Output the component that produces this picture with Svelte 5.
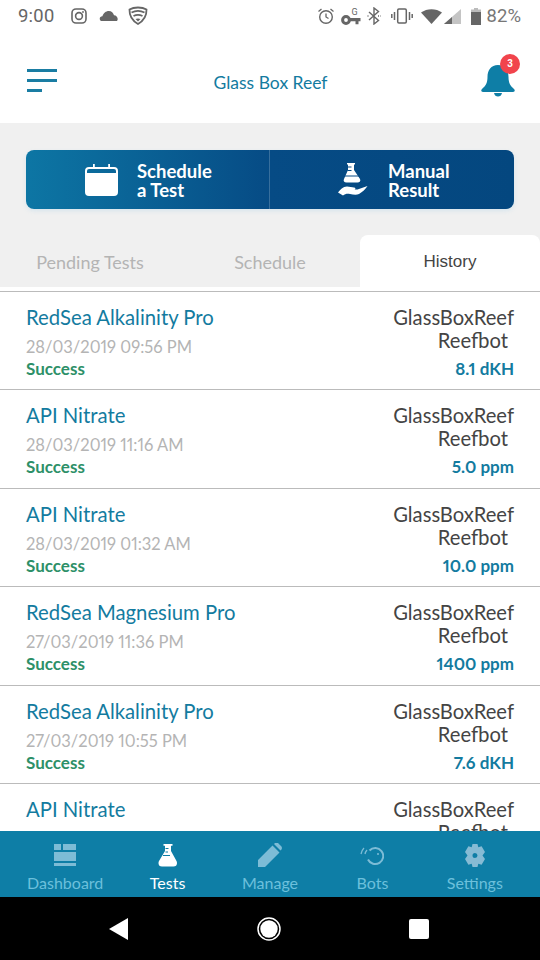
<script>
    const rows = [
        { name: "RedSea Alkalinity Pro", date: "28/03/2019 09:56 PM", value: "8.1 dKH" },
        { name: "API Nitrate", date: "28/03/2019 11:16 AM", value: "5.0 ppm" },
        { name: "API Nitrate", date: "28/03/2019 01:32 AM", value: "10.0 ppm" },
        { name: "RedSea Magnesium Pro", date: "27/03/2019 11:36 PM", value: "1400 ppm" },
        { name: "RedSea Alkalinity Pro", date: "27/03/2019 10:55 PM", value: "7.6 dKH" },
        { name: "API Nitrate", date: "27/03/2019 09:12 PM", value: "4.0 ppm" }
    ];
</script>

<div class="page">
    <div class="status">
        <span class="time">9:00</span>
        <svg class="si" width="18" height="18" viewBox="0 0 18 18">
            <rect x="2" y="2" width="14" height="14" rx="4" fill="none" stroke="#666" stroke-width="1.6" />
            <circle cx="9" cy="9" r="3.4" fill="none" stroke="#666" stroke-width="1.6" />
            <circle cx="13" cy="5" r="0.9" fill="#666" />
        </svg>
        <svg class="si cloud" width="20" height="14" viewBox="0 0 20 14">
            <path d="M2 12c-2.200-1.400-1.400-4.600 1.400-4.700C4.200 4.200 7 2 9.800 2c2.700 0 4.700 2 5.200 4.300 3 .1 4.800 3.700 3 5.700z" fill="#666" />
        </svg>
        <svg class="si shield" width="20" height="20" viewBox="0 0 20 20">
            <path d="M1.500 3.500C6 .8 14 .8 18.500 3.500c.2 6-2.500 11-8.500 14.500C4 14.500 1.300 9.500 1.500 3.500z" fill="none" stroke="#666" stroke-width="1.800" />
            <path d="M3.500 6.500c4-2 9-2 13 0M5.500 10c3-1.500 6-1.500 9 0" fill="none" stroke="#666" stroke-width="1.800" />
            <path d="M7.500 13c1.500-.8 3.500-.8 5 0L10 15.500z" fill="#666" />
        </svg>
        <span class="spacer"></span>
        <svg class="ri" width="18" height="18" viewBox="0 0 18 18">
            <circle cx="9" cy="10" r="6.300" fill="none" stroke="#666" stroke-width="1.400" />
            <path d="M9 6.500V10l2.500 1.500M1.500 4.500 4.500 2M16.500 4.500 13.500 2" fill="none" stroke="#666" stroke-width="1.300" />
        </svg>
        <svg class="ri key" width="20" height="20" viewBox="0 0 20 20">
            <circle cx="5" cy="14" r="3.400" fill="none" stroke="#666" stroke-width="3" />
            <path d="M8 12h11.500v3.200h-2v3h-3v-3H8z" fill="#666" />
            <text x="10.500" y="8.500" class="g">G</text>
        </svg>
        <svg class="ri" width="14" height="18" viewBox="0 0 14 18">
            <path d="M2 5l9.500 8.500L7 17V1l4.500 3.500L2 13" fill="none" stroke="#666" stroke-width="1.400" />
            <path d="M.5 9h2M11 9h2.500" stroke="#666" stroke-width="1.400" stroke-dasharray="1 1" />
        </svg>
        <svg class="ri vib" width="22" height="16" viewBox="0 0 22 16">
            <rect x="6.700" y="1" width="8.600" height="14" rx="1.200" fill="none" stroke="#666" stroke-width="1.500" />
            <path d="M3.500 4v8M18.500 4v8M.8 6v4M21.200 6v4" stroke="#666" stroke-width="1.500" />
        </svg>
        <svg class="ri wifi" width="21" height="15" viewBox="0 0 21 15">
            <path d="M0 3.500C6-1 15-1 21 3.500L10.500 15z" fill="#666" />
        </svg>
        <svg class="ri sig" width="17" height="15" viewBox="0 0 17 15">
            <path d="M17 0v15H0z" fill="#c4c4c4" />
            <path d="M8 8v7H0z" fill="#666" />
        </svg>
        <svg class="ri bat" width="10" height="17" viewBox="0 0 10 17">
            <path d="M3 0h4v1.500h3V4H0V1.500h3z" fill="#bbb" />
            <path d="M0 4h10v13H0z" fill="#666" />
        </svg>
        <span class="pct">82%</span>
    </div>

    <header>
        <div class="burger"><i></i><i></i><i class="short"></i></div>
        <div class="title">Glass Box Reef</div>
        <div class="bell">
            <svg width="36" height="32" viewBox="0 0 36 32">
                <path d="M18 0c-7 0-10.500 5-10.500 12 0 6-2 9-5.500 12-1.200 1-1 3 1 3h30c2 0 2.200-2 1-3-3.500-3-5.500-6-5.500-12C28.500 5 25 0 18 0z" fill="#0e7ea6" />
                <path d="M14 28h8c-.5 2.500-2 3.500-4 3.500s-3.500-1-4-3.500z" fill="#0e7ea6" />
            </svg>
            <span class="badge">3</span>
        </div>
    </header>

    <section class="top">
        <div class="actions">
            <div class="action first">
                <svg width="33" height="32" viewBox="0 0 33 32">
                    <path fill-rule="evenodd" d="M4 3h4V0h1.800v3h13.400V0H25v3h4a4 4 0 0 1 4 4v4H0V7a4 4 0 0 1 4-4zM4 5a2 2 0 0 0-2 2v2h29V7a2 2 0 0 0-2-2z" fill="#fff" />
                    <path d="M0 10h33v18a4 4 0 0 1-4 4H4a4 4 0 0 1-4-4z" fill="#fff" />
                </svg>
                <span>Schedule<br />a Test</span>
            </div>
            <div class="action second">
                <svg width="30" height="33" viewBox="0 0 30 33">
                    <path d="M9 0h8v1.500h-1V7l6 9c1 2-.2 3.500-2.500 3.500h-11C6.200 19.500 5 18 6 16l4-9V1.500H9z" fill="#fff" />
                    <path d="M9.500 4h4M9.500 7.500h4M5 13h16" stroke="#064b85" stroke-width="1.200" />
                    <path d="M0 29.500c2-2.500 5-6 9-6 2.500 0 5 1 7 1 1.500 0 2 1.500.5 2h-3l6 0 10-3.500c-2 3-5 6-8.500 8-3 1.500-6 .5-9 0-3-.5-5 0-7 1.500z" fill="#fff" />
                </svg>
                <span>Manual<br />Result</span>
            </div>
        </div>
        <div class="tabs">
            <div class="tab">Pending Tests</div>
            <div class="tab">Schedule</div>
            <div class="tab active">History</div>
        </div>
    </section>

    <div class="list">
        {#each rows as row}
            <div class="row">
                <div class="left">
                    <div class="name">{row.name}</div>
                    <div class="date">{row.date}</div>
                    <div class="state">Success</div>
                </div>
                <div class="right">
                    <div class="owner">GlassBoxReef</div>
                    <div class="bot">Reefbot</div>
                    <div class="value">{row.value}</div>
                </div>
            </div>
        {/each}
    </div>

    <nav>
        <div class="item">
            <svg width="24" height="23" viewBox="0 0 24 23">
                <path d="M1 0h7v6H1zM10 0h13v6H10zM1 8h22v9H1zM1 19h22v3H1z" fill="#7dbcd6" />
            </svg>
            <span>Dashboard</span>
        </div>
        <div class="item on">
            <svg width="20" height="23" viewBox="0 0 20 23">
                <path d="M5.500 0h9v1.800h-1.500V7l5.500 10c1.300 2.800 0 5.500-3 5.500H4c-3 0-4.300-2.700-3-5.500L7 7V1.800H5.500z" fill="#fff" />
                <path d="M7.500 4.500h3M7.500 8h2.500M5 11.500h7" stroke="#0e7ea6" stroke-width="1" />
            </svg>
            <span>Tests</span>
        </div>
        <div class="item">
            <svg width="24" height="24" viewBox="0 0 24 24">
                <path d="M0 24v-7L14.500 2.500l7 7L7 24zM16 1l1-1c1-.6 2-.6 3 0l3.500 3.500c.6 1 .6 2 0 3l-1 1z" fill="#7dbcd6" />
            </svg>
            <span>Manage</span>
        </div>
        <div class="item">
            <svg width="24" height="22" viewBox="0 0 24 22">
                <path d="M9.500 5.500a8 8 0 1 1-1.500 9" fill="none" stroke="#7dbcd6" stroke-width="2" />
                <circle cx="18" cy="9" r="1" fill="#7dbcd6" />
                <path d="M1 9c.5-2.500 1.500-4.500 3-6M5 9c.3-1.500 1-2.800 2-4" fill="none" stroke="#7dbcd6" stroke-width="1.300" />
            </svg>
            <span>Bots</span>
        </div>
        <div class="item">
            <svg width="20" height="23" viewBox="0 0 20 23">
                <path fill-rule="evenodd" d="M7.500 0h5l.8 3.300 3.300-1L20 8l-2.500 3.500L20 15l-3.400 5.700-3.300-1-.8 3.300h-5l-.8-3.300-3.300 1L0 15l2.500-3.500L0 8l3.400-5.700 3.300 1zM10 9a2.500 2.500 0 1 0 0 5 2.500 2.500 0 0 0 0-5z" fill="#86bbd4" />
            </svg>
            <span>Settings</span>
        </div>
    </nav>

    <div class="android">
        <svg width="20" height="22" viewBox="0 0 20 22"><path d="M19 0v22L0 11z" fill="#fff" /></svg>
        <svg width="24" height="24" viewBox="0 0 24 24">
            <circle cx="12" cy="12" r="11" fill="none" stroke="#fff" stroke-width="1.500" />
            <circle cx="12" cy="12" r="8.700" fill="#fff" />
        </svg>
        <div class="square"></div>
    </div>
</div>

<style>
    :global(body) {
        margin: 0;
    }

    .page {
        width: 540px;
        height: 960px;
        display: flex;
        flex-direction: column;
        background: #fff;
        font-family: Lato, "Open Sans", sans-serif;
        font-variant-numeric: proportional-nums;
        overflow: hidden;
    }

    .status {
        height: 32px;
        display: flex;
        align-items: center;
        padding: 0 19px 0 18px;
        color: #666;
        font-family: Roboto, sans-serif;
        flex: none;
    }

    .time {
        font-size: 18.500px;
        margin-right: 15px;
    }

    .si {
        margin-right: 11px;
    }

    .cloud {
        margin-right: 9px;
    }

    .spacer {
        flex: 1;
    }

    .ri {
        margin-right: 6px;
    }

    .g {
        font-size: 9px;
        fill: #666;
        font-family: Roboto, sans-serif;
    }

    .vib {
        margin: 0 8px 0 4px;
    }

    .sig {
        margin: 0 10px 0 -4px;
    }

    .pct {
        font-size: 18.500px;
        color: #777;
        margin-left: -1px;
    }

    header {
        height: 91px;
        box-sizing: border-box;
        padding: 10px 24px 0 27px;
        display: flex;
        align-items: center;
        justify-content: space-between;
        flex: none;
    }

    .burger {
        width: 30px;
        display: flex;
        flex-direction: column;
        gap: 7px;
        margin-bottom: 4px;
    }

    .burger i {
        display: block;
        height: 3px;
        background: #1a7da3;
    }

    .burger .short {
        width: 15px;
    }

    .title {
        color: #137b9f;
        font-size: 17.500px;
        margin-left: 4px;
    }

    .bell {
        position: relative;
        width: 36px;
        height: 32px;
        margin-bottom: 3px;
    }

    .bell svg {
        display: block;
    }

    .badge {
        position: absolute;
        top: -11px;
        right: -4px;
        width: 20px;
        height: 20px;
        border-radius: 50%;
        background: #f1444c;
        color: #fff;
        font: bold 10px/20px "Liberation Sans", sans-serif;
        text-align: center;
    }

    .top {
        background: #f0f0f0;
        height: 164px;
        flex: none;
        display: flex;
        flex-direction: column;
        justify-content: space-between;
    }

    .actions {
        margin: 27px 26px 0;
        height: 59px;
        border-radius: 8px;
        overflow: hidden;
        display: flex;
        background: linear-gradient(90deg, #0d76a4, #064b85 50%, #04477f);
        box-shadow: 0 2px 4px rgba(180, 215, 235, 0.4);
    }

    .action {
        display: flex;
        align-items: center;
        color: #fff;
        font-size: 18.500px;
        font-weight: 700;
        line-height: 19px;
    }

    .action span {
        padding-top: 2px;
    }

    .first {
        width: 244px;
        padding-left: 59px;
        gap: 19px;
        box-sizing: border-box;
        border-right: 1px solid rgba(255, 255, 255, 0.2);
    }

    .second {
        flex: 1;
        padding-left: 68px;
        gap: 20px;
    }

    .tabs {
        display: flex;
        height: 52px;
    }

    .tab {
        flex: 1;
        display: flex;
        align-items: center;
        justify-content: center;
        padding-top: 2px;
        box-sizing: border-box;
        color: #b4b4b4;
        font-size: 18px;
    }

    .active {
        background: #fff;
        color: #444;
        border-radius: 8px 8px 0 0;
        font-family: "Liberation Sans", sans-serif;
        font-size: 17px;
    }

    .list {
        flex: 1;
        min-height: 0;
        overflow: hidden;
        padding-top: 4px;
    }

    .row {
        height: 97.400px;
        border-top: 1px solid #bbb;
        display: flex;
        justify-content: space-between;
        padding: 0 26px;
    }

    .left {
        padding-top: 12px;
    }

    .name {
        color: #137b9f;
        font-size: 20.300px;
        line-height: 26px;
    }

    .date {
        color: #b4b4b4;
        font-size: 16.500px;
        line-height: 20px;
        margin-top: 7px;
    }

    .state {
        color: #2d9068;
        font-size: 17px;
        font-weight: 700;
        line-height: 20px;
        margin-top: 2px;
    }

    .right {
        text-align: right;
        padding-top: 12px;
    }

    .owner {
        color: #444;
        font-size: 20.200px;
        line-height: 26px;
    }

    .bot {
        color: #444;
        font-size: 20.200px;
        line-height: 20px;
        padding-right: 6px;
    }

    .value {
        color: #137b9f;
        font-size: 17px;
        font-weight: 700;
        line-height: 20px;
        margin-top: 9px;
    }

    nav {
        height: 66px;
        background: #0e7ea6;
        display: flex;
        flex: none;
        padding: 0 14px;
    }

    .item {
        flex: 1;
        display: flex;
        flex-direction: column;
        align-items: center;
        justify-content: flex-end;
        height: 61px;
        color: #6cc0dc;
        font-size: 16px;
    }

    .item svg {
        margin-bottom: 6px;
    }

    .item.on {
        color: #fff;
    }

    .android {
        height: 63px;
        background: #000;
        flex: none;
        display: flex;
        align-items: center;
        justify-content: space-between;
        padding: 0 111px 0 109px;
    }

    .square {
        width: 20px;
        height: 20px;
        background: #fff;
        border-radius: 2px;
    }
</style>
